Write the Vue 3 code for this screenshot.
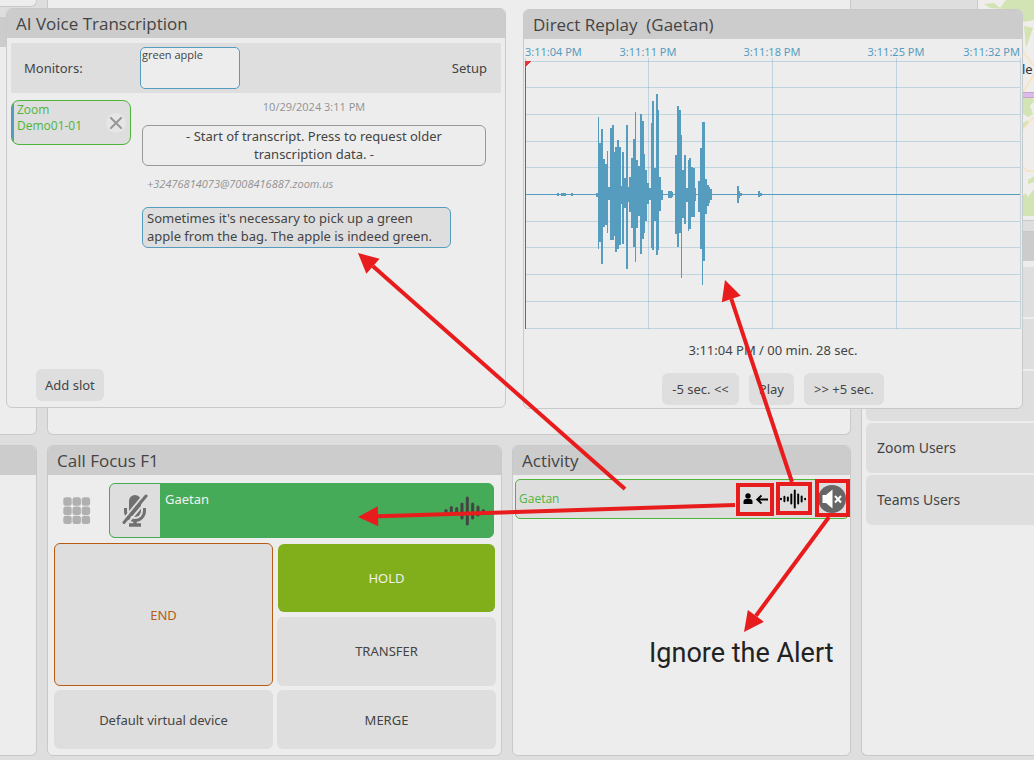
<script setup>
import { ref } from 'vue'

const keyword = ref('green apple')

// Waveform columns: [x, width, top, bottom] in chart pixels
const wave = [
  [32, 2, 154, 157], [36, 5, 154, 157], [46, 2, 154, 157], [71, 2, 154, 158],
  [73, 1, 78, 210], [74, 2, 104, 203], [76, 2, 90, 225], [78, 2, 120, 188],
  [80, 2, 125, 186], [82, 1, 112, 194], [83, 2, 148, 161], [85, 2, 89, 201],
  [87, 2, 86, 201], [89, 1, 113, 197], [90, 2, 108, 213], [92, 2, 101, 210],
  [94, 2, 108, 206], [96, 1, 147, 165], [97, 2, 113, 205], [99, 2, 139, 169],
  [101, 2, 86, 230], [103, 1, 148, 163], [104, 2, 138, 173], [106, 2, 119, 189],
  [108, 2, 100, 208], [110, 1, 73, 223], [111, 2, 121, 189], [113, 2, 127, 177],
  [115, 2, 75, 215], [117, 2, 82, 200], [119, 1, 115, 194], [120, 2, 131, 182],
  [122, 2, 144, 165], [124, 2, 149, 161], [126, 1, 84, 209], [127, 2, 62, 211],
  [129, 2, 129, 182], [131, 2, 55, 216], [133, 1, 71, 211], [134, 2, 138, 172],
  [136, 2, 151, 161], [143, 4, 152, 159], [147, 1, 153, 158], [150, 2, 116, 195],
  [152, 2, 67, 208], [154, 2, 71, 194], [156, 1, 96, 239], [157, 2, 131, 179],
  [159, 2, 116, 185], [161, 2, 149, 163], [163, 1, 121, 192], [164, 2, 119, 190],
  [166, 2, 128, 178], [168, 2, 129, 178], [170, 1, 149, 162], [173, 2, 142, 173],
  [175, 2, 109, 210], [177, 1, 83, 246], [178, 2, 83, 222], [180, 2, 140, 175],
  [182, 2, 146, 167], [184, 1, 148, 164], [185, 2, 150, 161], [212, 2, 147, 164],
  [214, 1, 152, 159], [215, 2, 154, 157], [233, 2, 152, 158], [235, 2, 154, 157]
]
const wavePath = wave.map(([x, w, t, b]) => `M${x} ${t}h${w}V${b}h-${w}z`).join('')

const rows = [22, 48, 75, 102, 128, 182, 208, 235, 262, 289]
const ticks = [
  { x: 0, label: '3:11:04 PM', anchor: 'start' },
  { x: 123, label: '3:11:11 PM', anchor: 'middle' },
  { x: 247, label: '3:11:18 PM', anchor: 'middle' },
  { x: 371, label: '3:11:25 PM', anchor: 'middle' },
  { x: 495, label: '3:11:32 PM', anchor: 'end' }
]

const voiceBars = [4, 10, 8, 17, 29, 17, 11, 4]

const boxes = [
  { x: 738, y: 485, w: 34, h: 29 },
  { x: 778, y: 484, w: 32, h: 29 },
  { x: 817, y: 481, w: 31, h: 34 }
]

function arrow(x1, y1, x2, y2) {
  const len = Math.hypot(x2 - x1, y2 - y1)
  const ux = (x2 - x1) / len
  const uy = (y2 - y1) / len
  const bx = x2 - ux * 20
  const by = y2 - uy * 20
  return {
    line: { x1, y1, x2: bx, y2: by },
    head: `${x2},${y2} ${bx - uy * 10},${by + ux * 10} ${bx + uy * 10},${by - ux * 10}`
  }
}
const arrows = [
  arrow(625, 489, 358, 253),
  arrow(792, 482, 725, 280),
  arrow(735, 505, 358, 517),
  arrow(829, 517, 744, 632)
]
</script>

<template>
  <div class="desktop">
    <div class="side">
      <section class="panel stub"></section>
      <section class="panel upper"><div class="bar"></div></section>
      <section class="panel grow"><div class="bar"></div></section>
    </div>

    <section class="panel stage"></section>

    <section class="panel focus">
      <h2 class="bar">Call Focus F1</h2>
      <div class="call-row">
        <button class="keypad" aria-label="Keypad">
          <svg width="28" height="28" viewBox="0 0 28 28">
            <g v-for="r in 3" :key="r">
              <rect v-for="c in 3" :key="c" :x="(c - 1) * 9.2 + 0.3" :y="(r - 1) * 9.2 + 0.3" width="8.400" height="8.400" rx="2.500" fill="#b0b0b0" />
            </g>
          </svg>
        </button>
        <div class="call">
          <button class="mute" aria-label="Mute microphone">
            <svg width="26" height="34" viewBox="0 0 26 34">
              <rect x="7" y="1" width="12" height="22" rx="6" fill="#707070" />
              <path d="M3.5 14v3a9.5 9.5 0 0 0 19 0v-3" fill="none" stroke="#707070" stroke-width="3" />
              <path d="M13 26v4M7 31h12" fill="none" stroke="#707070" stroke-width="3.400" />
              <path d="M.5 26.500 22.500 0M4.500 30.500 26 5" stroke="#dedede" stroke-width="2" />
              <path d="M2 28.500 24 2" stroke="#707070" stroke-width="3" stroke-linecap="round" />
            </svg>
          </button>
          <span class="call-name">Gaetan</span>
          <svg class="call-voice" width="42" height="30" viewBox="0 0 42 30">
            <line v-for="(h, i) in voiceBars" :key="i" :x1="2 + i * 5.33" :x2="2 + i * 5.33" :y1="16.5 - h / 2" :y2="13.5 + h / 2" stroke="#444" stroke-width="3" stroke-linecap="round" />
          </svg>
        </div>
      </div>
      <div class="actions">
        <button class="tile end">END</button>
        <button class="tile hold">HOLD</button>
        <button class="tile">TRANSFER</button>
        <button class="tile">Default virtual device</button>
        <button class="tile">MERGE</button>
      </div>
    </section>

    <section class="panel activity">
      <h2 class="bar">Activity</h2>
      <div class="event">
        <span class="event-name">Gaetan</span>
        <button class="icon take" aria-label="Take call">
          <svg width="28" height="14" viewBox="0 0 28 14">
            <circle cx="7" cy="4" r="2.700" />
            <path d="M2.500 11.500V9.500Q2.500 7 5 7h4q2.500 0 2.500 2.500v2q0 .5-.5.5H3q-.5 0-.5-.5z" />
            <path d="M27 7.500H16.500M20.500 3.500 16.200 7.500l4.300 4" fill="none" stroke="#000" stroke-width="1.800" />
          </svg>
        </button>
        <button class="icon" aria-label="Replay">
          <svg width="26" height="20" viewBox="0 0 40 30">
            <line v-for="(h, i) in voiceBars" :key="i" :x1="1.5 + i * 5.3" :x2="1.5 + i * 5.3" :y1="16.5 - h / 2" :y2="13.5 + h / 2" stroke="#000" stroke-width="3" stroke-linecap="round" />
          </svg>
        </button>
        <button class="icon ignore" aria-label="Ignore alert">
          <svg width="28" height="28" viewBox="0 0 28 28">
            <circle cx="14" cy="14" r="14" fill="#666" />
            <path d="M4.500 10H8l6.500-5.500v19L8 18H4.500z" fill="#fff" />
            <path d="m17 11 6 6.500M23 11l-6 6.500" stroke="#fff" stroke-width="2" />
          </svg>
        </button>
      </div>
    </section>

    <div class="contacts">
      <section class="panel map">
        <svg width="100%" height="216" viewBox="0 0 52 216" preserveAspectRatio="xMaxYMin slice">
          <rect width="52" height="216" fill="#f0eeec" />
          <g fill="#d2e4b3">
            <path d="M2 4 12 3 18 8 24 0h28v20l-10 2-6-8-12-5-16-1z" />
            <path d="m42 26 9 2-7 20z" />
            <path d="m40 98 10-1 2 4-4 5 3 8-5 3-6-4zM40 124l6-4v5l-6 4zM46 180l6-4v6l-6 2zM40 196l4-3 2 4 6-8v27H40z" />
          </g>
          <path d="m40 50 12 16M52 75 41 92M40 130l12-13M40 166l5 5h7" fill="none" stroke="#f7e2bd" stroke-width="1.500" />
          <path d="M40 95h12" stroke="#c9a0d0" stroke-width="6" />
          <path d="M40 95h12" stroke="#dcbce4" stroke-width="4" />
          <text x="40" y="74" font-size="13" fill="#333">le</text>
        </svg>
      </section>
      <section class="panel grow">
        <div class="bar"></div>
        <div class="list">
          <div v-for="n in 3" :key="n" class="entry"></div>
          <button class="entry">Zoom Users</button>
          <button class="entry">Teams Users</button>
        </div>
      </section>
    </div>

    <section class="panel window transcription">
      <h2 class="bar">AI Voice Transcription</h2>
      <div class="monitors">
        <label for="keyword">Monitors:</label>
        <textarea id="keyword" v-model="keyword" spellcheck="false"></textarea>
        <button class="setup">Setup</button>
      </div>
      <div class="transcript">
        <div class="slot">
          <span class="slot-name">Zoom Demo01-01</span>
          <button class="close" aria-label="Remove slot">
            <svg width="12" height="12" viewBox="0 0 12 12"><path d="m0 0 12 12M12 0 0 12" stroke="#979797" stroke-width="2" /></svg>
          </button>
        </div>
        <div class="log">
          <time class="date">10/29/2024 3:11 PM</time>
          <button class="older">- Start of transcript. Press to request older transcription data. -</button>
          <span class="caller">+32476814073@7008416887.zoom.us</span>
          <p class="bubble">Sometimes it's necessary to pick up a green apple from the bag. The apple is indeed green.</p>
        </div>
      </div>
      <button class="btn add">Add slot</button>
    </section>

    <section class="panel window replay">
      <h2 class="bar">Direct Replay&nbsp; (Gaetan)</h2>
      <svg class="chart" width="496" height="290" viewBox="0 0 496 290" shape-rendering="crispEdges">
        <text v-for="t in ticks" :key="t.label" :x="t.x" y="17" :text-anchor="t.anchor">{{ t.label }}</text>
        <rect v-for="y in rows" :key="y" x="0" :y="y" width="495" height="1" class="grid-line" />
        <rect v-for="t in ticks" :key="t.x" :x="t.x" y="19" width="1" height="271" class="grid-line" />
        <rect x="0" y="155" width="495" height="1" class="wave" />
        <path :d="wavePath" class="wave" />
        <path d="M0 22h6L1 28v262H0z" fill="#e63238" />
      </svg>
      <p class="position">3:11:04 PM / 00 min. 28 sec.</p>
      <div class="controls">
        <button class="btn">-5 sec. &lt;&lt;</button>
        <button class="btn">Play</button>
        <button class="btn">&gt;&gt; +5 sec.</button>
      </div>
    </section>

    <svg class="notes" width="1034" height="760" viewBox="0 0 1034 760">
      <g fill="none" stroke="#e81c1c" stroke-width="4">
        <rect v-for="b in boxes" :key="b.x" :x="b.x" :y="b.y" :width="b.w" :height="b.h" />
        <line v-for="(a, i) in arrows" :key="i" v-bind="a.line" />
      </g>
      <polygon v-for="(a, i) in arrows" :key="i" :points="a.head" fill="#e81c1c" />
      <text x="649" y="662" class="note">Ignore the Alert</text>
    </svg>
  </div>
</template>

<style>
body {
  margin: 0;
  background: #dedede;
}
</style>

<style scoped>
.desktop {
  position: relative;
  display: grid;
  grid-template-columns: 37px 455fr 339fr 173px;
  grid-template-rows: 435px 1fr;
  gap: 10px;
  min-height: 100vh;
  padding-bottom: 4px;
  box-sizing: border-box;
  overflow: hidden;
  background: #dedede;
  color: #444;
  font: 13px/18px "Noto Sans", "Open Sans", sans-serif;
}
.desktop * {
  box-sizing: border-box;
}
button {
  padding: 0;
  border: 0;
  background: none;
  color: inherit;
  font: inherit;
  cursor: pointer;
}
svg {
  display: block;
}
.panel {
  border: 1px solid #c9c9c9;
  border-radius: 6px;
  background: #ededed;
  overflow: hidden;
}
.bar {
  flex: none;
  height: 29px;
  margin: 0;
  padding: 0 9px;
  background: #ccc;
  font: 17px/29px "Open Sans", "Noto Sans", sans-serif;
}
.side,
.contacts {
  grid-row: 1 / 3;
  display: flex;
  flex-direction: column;
  gap: 10px;
}
.side {
  grid-column: 1;
}
.side .panel {
  border-left: 0;
  border-top-left-radius: 0;
  border-bottom-left-radius: 0;
}
.stub {
  height: 7px;
  border-top: 0;
  border-top-right-radius: 0;
}
.upper {
  height: 418px;
}
.grow {
  flex: 1;
}
.stage {
  grid-column: 2 / 4;
  grid-row: 1;
  border-top: 0;
  border-top-left-radius: 0;
  border-top-right-radius: 0;
}
.focus {
  grid-column: 2;
  grid-row: 2;
  display: flex;
  flex-direction: column;
}
.call-row {
  display: flex;
  align-items: center;
  gap: 18px;
  padding: 8px 7px 5px 15px;
}
.call {
  flex: 1;
  display: flex;
  height: 55px;
  border: 1px solid #46ab58;
  border-radius: 6px;
  background: #46ab58;
  overflow: hidden;
}
.mute {
  display: flex;
  align-items: center;
  justify-content: center;
  width: 50px;
  background: #dedede;
}
.call-name {
  flex: 1;
  padding: 6px 5px;
  color: #f0f0f0;
}
.call-voice {
  align-self: center;
  margin-right: 7px;
}
.actions {
  flex: 1;
  display: grid;
  grid-template-columns: 1fr 1fr;
  grid-template-rows: 70fr 70fr 59fr;
  gap: 4px;
  padding: 0 5px 6px 6px;
}
.tile {
  border-radius: 6px;
  background: #dedede;
}
.end {
  grid-row: 1 / 3;
  border: 1px solid #b85c14;
  color: #b85c14;
}
.hold {
  margin: 1px;
  background: #80af1b;
  color: #f0f0f0;
}
.activity {
  grid-column: 3;
  grid-row: 2;
}
.event {
  display: flex;
  align-items: center;
  height: 40px;
  margin: 4px 1px 4px 2px;
  padding: 0 0 0 3px;
  border: 1px solid #4fb53a;
  border-radius: 5px;
  background: #dedede;
}
.event-name {
  flex: 1;
  color: #4fb53a;
  font-family: "Open Sans", "Noto Sans", sans-serif;
  font-size: 12px;
}
.icon {
  display: flex;
  align-items: center;
  justify-content: center;
  width: 39px;
  height: 36px;
}
.take {
  width: 36px;
}
.ignore {
  width: 32px;
  margin-left: 4px;
}
.contacts {
  grid-column: 4;
}
.map {
  align-self: flex-end;
  width: 57px;
  height: 221px;
  padding-left: 4px;
  border-width: 0 0 1px 1px;
  border-radius: 0;
}
.contacts .grow {
  border-right: 0;
  border-top-right-radius: 0;
  border-bottom-right-radius: 0;
}
.list {
  display: grid;
  gap: 2px;
  padding: 6px 0 0 4px;
}
.entry {
  height: 50px;
  padding: 0 11px;
  border-radius: 6px 0 0 6px;
  background: #dedede;
  font-size: 14px;
  text-align: left;
}
.window {
  position: absolute;
  display: flex;
  flex-direction: column;
  width: 500px;
  height: 400px;
}
.transcription {
  left: 6px;
  top: 8px;
}
.replay {
  left: 523px;
  top: 9px;
}
.monitors {
  display: flex;
  align-items: center;
  height: 50px;
  margin: 5px 4px 7px;
  padding: 0 14px 0 13px;
  background: #dedede;
}
.monitors label {
  width: 116px;
}
.monitors textarea {
  width: 100px;
  height: 42px;
  padding: 0 1px;
  border: 1px solid #569cbe;
  border-radius: 5px;
  outline: 0;
  background: #ededed;
  color: #444;
  font: 11px/14px "Open Sans", "Noto Sans", sans-serif;
  resize: none;
}
.setup {
  margin-left: auto;
}
.transcript {
  flex: 1;
  display: flex;
  gap: 11px;
  padding: 0 19px 0 4px;
}
.slot {
  display: flex;
  align-items: center;
  justify-content: space-between;
  width: 120px;
  height: 45px;
  padding: 0 4px;
  border: 1px solid #4fb53a;
  border-radius: 8px;
  background: linear-gradient(90deg, #569cbe 2px, #dedede 2px);
}
.slot-name {
  align-self: flex-start;
  width: 74px;
  padding: 1px;
  color: #4fb53a;
  font: 12px/16px "Open Sans", "Noto Sans", sans-serif;
}
.close {
  display: grid;
  place-items: center;
  width: 20px;
  height: 20px;
  border-radius: 50%;
  background: #e6e6e6;
}
.log {
  flex: 1;
  display: flex;
  flex-direction: column;
  align-items: flex-start;
}
.date,
.caller {
  color: #929292;
  font: 11px/14px "Open Sans", "Noto Sans", sans-serif;
}
.date {
  align-self: center;
}
.older {
  align-self: stretch;
  height: 41px;
  margin-top: 11px;
  padding: 0 30px 2px;
  border: 1px solid #999;
  border-radius: 6px;
}
.caller {
  margin: 11px 5px;
  font-style: italic;
}
.bubble {
  width: 309px;
  height: 41px;
  margin: 5px 0 0;
  padding: 1px 4px;
  border: 1px solid #569cbe;
  border-radius: 6px;
  background: #dedede;
}
.btn {
  height: 32px;
  padding: 0 9px;
  border-radius: 6px;
  background: #dedede;
}
.add {
  align-self: flex-start;
  margin: 0 29px 6px;
}
.chart {
  margin-left: 1px;
}
.chart text {
  fill: #569cbe;
  font-size: 11px;
}
.grid-line {
  fill: #569cbe;
  opacity: 0.3;
}
.wave {
  fill: #569cbe;
}
.position {
  margin: 12px 0 14px;
  text-align: center;
}
.controls {
  display: flex;
  justify-content: center;
  gap: 10px;
}
.controls .btn {
  padding: 0 10px;
}
.notes {
  position: absolute;
  left: 0;
  top: 0;
  pointer-events: none;
}
.note {
  fill: #222;
  font: 27px Roboto, sans-serif;
}
</style>
